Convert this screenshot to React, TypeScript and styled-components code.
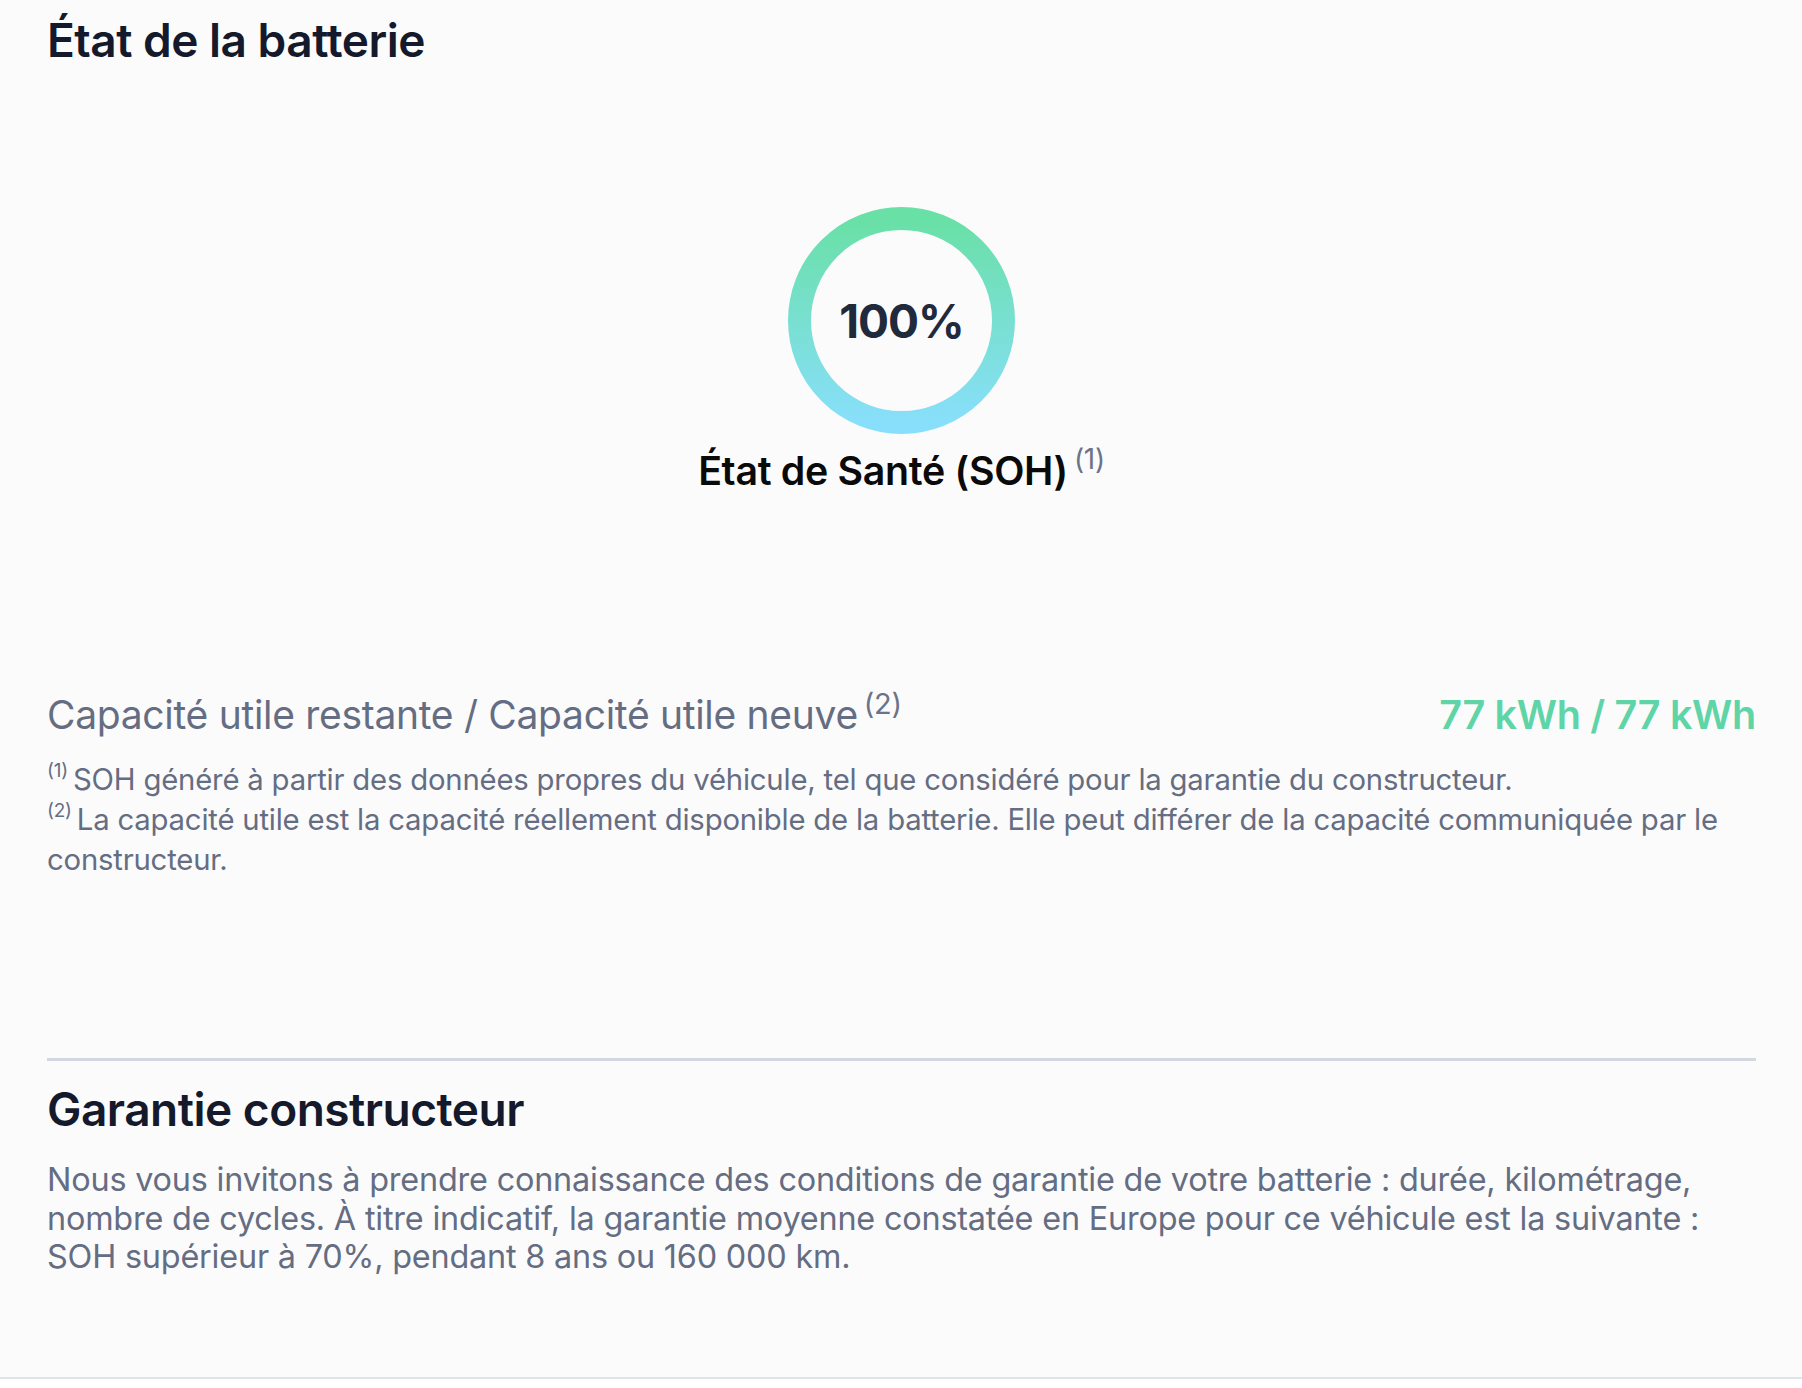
import styled, { createGlobalStyle } from 'styled-components'

const GlobalStyle = createGlobalStyle`
	html, body {
		margin: 0;
		padding: 0;
		background: #ffffff;
	}
	body {
		font-family: Inter, "Liberation Sans", Arial, sans-serif;
		-webkit-font-smoothing: antialiased;
	}
`

const Page = styled.main`
	height: 1379px;
	box-sizing: border-box;
	padding: 16px 46px 0 47px;
	background: #fbfbfc;
	border-bottom: 2px solid #dfe4e9;
	display: flex;
	flex-direction: column;
`

const Title = styled.h2<{ $size: number }>`
	margin: 0;
	font-size: ${p => p.$size}px;
	line-height: 48px;
	font-weight: 600;
	letter-spacing: -0.5px;
	color: #141a2b;
`

const Gauge = styled.section`
	display: flex;
	flex-direction: column;
	align-items: center;
	margin-top: 143px;
	gap: 13px;
`

const Ring = styled.div`
	display: grid;
	place-items: center;
	width: 227px;
	height: 227px;

	& > * { grid-area: 1 / 1; }
`

const Percent = styled.span`
	font-size: 46px;
	font-weight: 700;
	letter-spacing: -1px;
	color: #1f2a3c;
`

const GaugeLabel = styled.p`
	margin: 0;
	font-size: 39.3px;
	line-height: 48px;
	font-weight: 600;
	color: #0a0a0a;
	letter-spacing: -0.3px;
`

const Sup = styled.sup<{ $size: number }>`
	font-size: ${p => p.$size}px;
	line-height: 1;
	font-weight: 400;
	color: #6b7389;
	margin-left: 6px;
	vertical-align: top;
	position: relative;
	top: -2px;
`

const CapacityRow = styled.div`
	display: flex;
	justify-content: space-between;
	align-items: baseline;
	margin-top: 196px;
`

const CapacityLabel = styled.p`
	margin: 0;
	font-size: 39px;
	line-height: 48px;
	color: #646d82;
	letter-spacing: -0.3px;
`

const CapacityValue = styled.span`
	font-size: 39.5px;
	line-height: 48px;
	font-weight: 600;
	color: #5fd4a7;
	letter-spacing: -0.3px;
`

const Notes = styled.div`
	margin-top: 21px;
	font-size: 29.3px;
	line-height: 40px;
	color: #646d82;
	letter-spacing: -0.2px;
`

const Note = styled.p`
	margin: 0;
`

const NoteMark = styled.sup`
	font-size: 19px;
	line-height: 1;
	vertical-align: top;
	position: relative;
	top: 1px;
	margin-right: 5px;
`

const Divider = styled.hr`
	margin: 178px 0 0;
	border: none;
	height: 3px;
	background: #d4d7df;
`

const Warranty = styled.section`
	display: flex;
	flex-direction: column;
	gap: 28px;
	margin-top: 24px;
`

const Paragraph = styled.p`
	margin: 0;
	font-size: 32.4px;
	line-height: 38.5px;
	color: #646d82;
	letter-spacing: -0.2px;
`

function GaugeRing({ value }: { value: number }) {
	return (
		<Ring>
			<svg width="227" height="227" viewBox="0 0 227 227">
				<defs>
					<linearGradient id="soh" x1="0" y1="0" x2="0" y2="1">
						<stop offset="0%" stopColor="#69e0a6" />
						<stop offset="100%" stopColor="#88dffb" />
					</linearGradient>
				</defs>
				<circle cx="113.5" cy="113.5" r="102" fill="none" stroke="url(#soh)" strokeWidth="23" />
			</svg>
			<Percent>{value}%</Percent>
		</Ring>
	)
}

export default function App() {
	return (
		<>
			<GlobalStyle />
			<Page>
				<Title $size={46}>État de la batterie</Title>

				<Gauge>
					<GaugeRing value={100} />
					<GaugeLabel>
						État de Santé (SOH)<Sup $size={28}>(1)</Sup>
					</GaugeLabel>
				</Gauge>

				<CapacityRow>
					<CapacityLabel>
						Capacité utile restante / Capacité utile neuve<Sup $size={29}>(2)</Sup>
					</CapacityLabel>
					<CapacityValue>77 kWh / 77 kWh</CapacityValue>
				</CapacityRow>

				<Notes>
					<Note><NoteMark>(1)</NoteMark>SOH généré à partir des données propres du véhicule, tel que considéré pour la garantie du constructeur.</Note>
					<Note><NoteMark>(2)</NoteMark>La capacité utile est la capacité réellement disponible de la batterie. Elle peut différer de la capacité communiquée par le constructeur.</Note>
				</Notes>

				<Divider />

				<Warranty>
					<Title $size={46}>Garantie constructeur</Title>
					<Paragraph>
						Nous vous invitons à prendre connaissance des conditions de garantie de votre batterie : durée, kilométrage, nombre de cycles. À titre indicatif, la garantie moyenne constatée en Europe pour ce véhicule est la suivante : SOH supérieur à 70%, pendant 8 ans ou 160 000 km.
					</Paragraph>
				</Warranty>
			</Page>
		</>
	)
}
